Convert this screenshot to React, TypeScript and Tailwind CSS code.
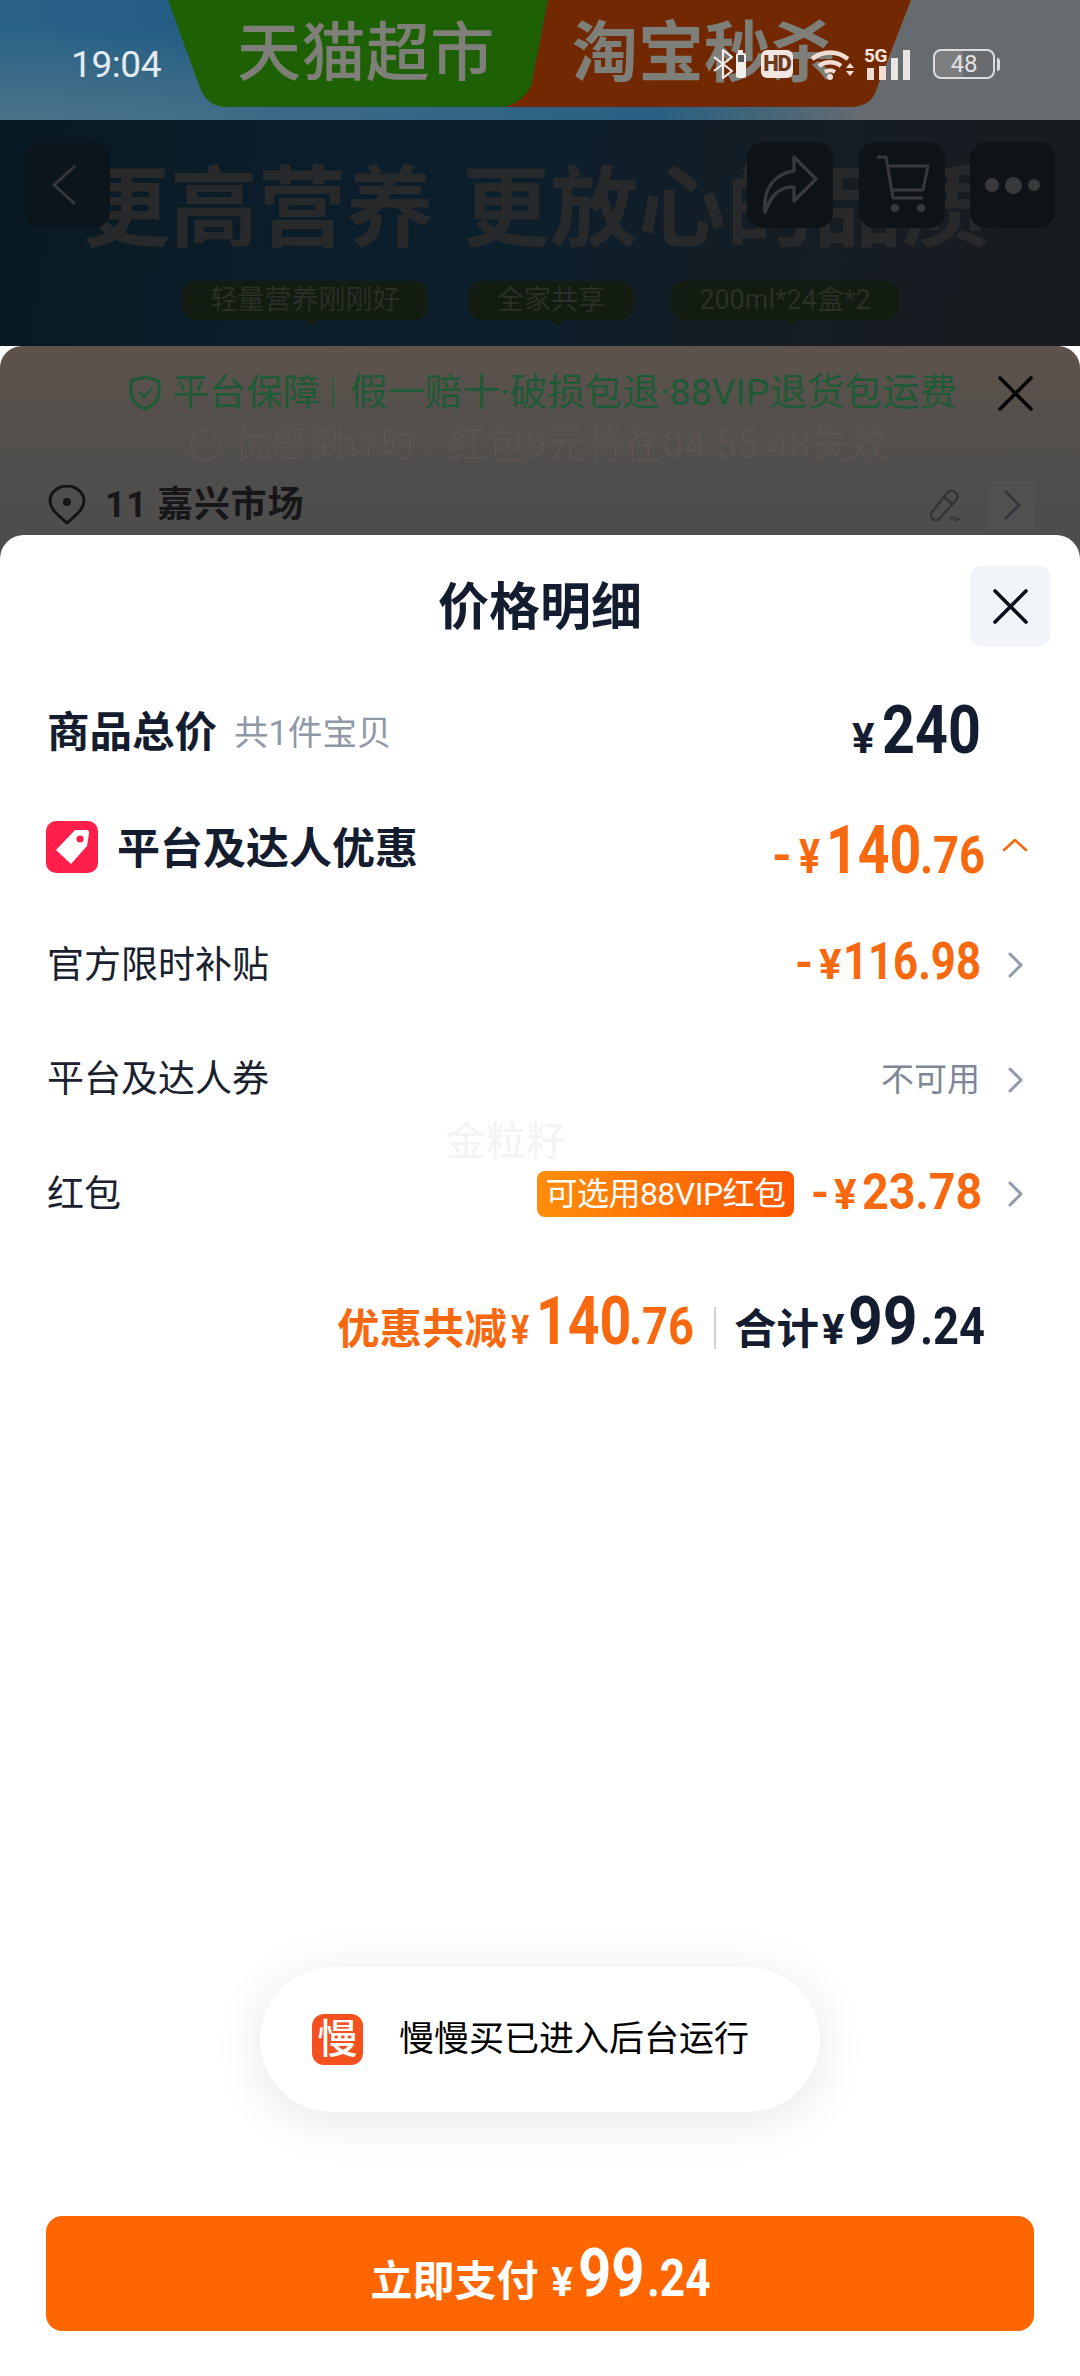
import React from "react";

const CJK = "font-['Roboto','Noto_Sans_CJK_SC',sans-serif]";

function Chevron({ color = "#8f9aab" }: { color?: string }) {
  return (
    <svg width="17" height="26" viewBox="0 0 17 26" fill="none">
      <path d="M3 2 L14 13 L3 24" stroke={color} strokeWidth="3" strokeLinecap="round" strokeLinejoin="round" />
    </svg>
  );
}

function Cross({ size, color, w = 4 }: { size: number; color: string; w?: number }) {
  return (
    <svg width={size} height={size} viewBox="0 0 34 34" fill="none">
      <path d="M2 2 L32 32 M32 2 L2 32" stroke={color} strokeWidth={w} strokeLinecap="round" />
    </svg>
  );
}

/* A narrowed run of digits: the box keeps the narrowed width, the glyphs are squeezed to fit it. */
function Cond({ c, children }: { c: string; children: React.ReactNode }) {
  return <span className={`inline-block origin-left leading-none font-bold whitespace-nowrap ${c}`}>{children}</span>;
}

function StatusIcons() {
  return (
    <div className="flex items-center h-[32px] mt-[8px] text-white">
      <svg width="36" height="32" viewBox="0 0 36 32" fill="none" className="mr-[13px]">
        <path d="M2 9 L20 23 L11 30 L11 2 L20 9 L2 23" stroke="#f1eeec" strokeWidth="2.2" strokeLinejoin="round" />
        <rect x="26" y="2" width="5" height="3" fill="#f1eeec" />
        <rect x="24" y="5" width="10" height="25" rx="2" fill="#f1eeec" />
        <rect x="26" y="7" width="6" height="7" fill="#5a5a58" />
      </svg>
      <div className="w-[32px] h-[28px] rounded-[6px] bg-[#f2e6e0] flex items-center justify-center mr-[17px]">
        <span className="text-[22px] font-black leading-none text-[#6c3a22] tracking-[-1px] font-['Roboto',sans-serif]">HD</span>
      </div>
      <svg width="44" height="32" viewBox="0 0 44 32" fill="none" className="mr-[13px]">
        <path d="M2 11 A28 28 0 0 1 38 11" stroke="#f1ddd3" strokeWidth="4.4" />
        <path d="M9 18 A18 18 0 0 1 31 18" stroke="#f1ddd3" strokeWidth="4.4" />
        <path d="M15 24 A9 9 0 0 1 25 24" stroke="#f1ddd3" strokeWidth="4" />
        <circle cx="20" cy="29" r="3" fill="#f1ddd3" />
        <path d="M36 20 L40 15 L44 20 Z M36 23 L44 23 L40 28 Z" fill="#f1ddd3" />
      </svg>
      <div className="relative w-[50px] h-[32px] mr-[16px]">
        <span className="absolute left-[-3px] top-[-2px] text-[19px] font-bold leading-none text-[#f4e3da] tracking-[-0.5px] font-['Roboto',sans-serif]">5G</span>
        <div className="absolute inset-0 flex items-end gap-[5px]">
          <div className="w-[7px] h-[12px] bg-[#f1ddd3]" />
          <div className="w-[7px] h-[14px] bg-[#f1ddd3]" />
          <div className="w-[7px] h-[22px] bg-[#e8e6e4]" />
          <div className="w-[7px] h-[30px] bg-[#e8e6e4]" />
        </div>
      </div>
      <div className="relative w-[62px] h-[30px] rounded-[8px] border-2 border-[#dcdcdc] flex items-center justify-center bg-[linear-gradient(to_right,#7b7d7f_48%,transparent_48%)]">
        <span className="text-[24px] leading-none text-[#e2e2e2] font-['Roboto',sans-serif]">48</span>
      </div>
      <div className="w-[3px] h-[13px] rounded-r bg-[#dcdcdc] ml-[2px]" />
    </div>
  );
}

function Tag({ text, w }: { text: string; w: string }) {
  return (
    <div className={`relative h-[39px] ${w} rounded-[14px] bg-[#121c10] flex items-center justify-center`}>
      <span className="text-[27px] leading-none text-[#2b3028] whitespace-nowrap">{text}</span>
      <div className="absolute bottom-[-6px] left-1/2 w-0 h-0 border-x-[6px] border-x-transparent border-t-[6px] border-t-[#121c10]" />
    </div>
  );
}

function HeaderArea() {
  return (
    <div className="relative h-[226px] bg-[linear-gradient(100deg,#0a1a24_0%,#0c1f2d_45%,#161d23_75%,#181c20_100%)] overflow-hidden">
      <div className="absolute left-[82px] top-[41px] flex text-[88px] leading-[96px] font-bold text-[#27292a] whitespace-nowrap">
        <span>更高营养</span>
        <span className="ml-[28px]">更放心的品质</span>
      </div>
      <div className="relative flex items-start pt-[22px] pl-[25px] pr-[25px]">
        <div className="w-[85px] h-[86px] rounded-[16px] bg-[#0c151c] flex items-center justify-center">
          <svg width="26" height="42" viewBox="0 0 26 42" fill="none" className="mr-[8px]">
            <path d="M24 2 L3 21 L24 40" stroke="#34383c" strokeWidth="3" />
          </svg>
        </div>
        <div className="ml-auto w-[86px] h-[86px] rounded-[16px] bg-[#0e1318] flex items-center justify-center">
          <svg width="58" height="62" viewBox="0 0 58 62" fill="none">
            <path d="M33 3 L55 25 L33 47 L33 33 C18 32 10 42 4 58 C2 36 12 20 33 17 Z" stroke="#38393b" strokeWidth="3.5" strokeLinejoin="round" />
          </svg>
        </div>
        <div className="ml-[26px] w-[86px] h-[86px] rounded-[16px] bg-[#0e1318] flex items-center justify-center">
          <svg width="58" height="62" viewBox="0 0 58 62" fill="none">
            <path d="M4 3 L13 3 L20 44 L50 44 M14 12 L55 12 L50 36 L19 36" stroke="#38393b" strokeWidth="3" strokeLinejoin="round" />
            <circle cx="22" cy="54" r="4" fill="#38393b" />
            <circle cx="48" cy="54" r="4" fill="#38393b" />
          </svg>
        </div>
        <div className="ml-[25px] w-[85px] h-[86px] rounded-[16px] bg-[#0e1318] flex items-center justify-center gap-[6px]">
          <div className="w-[14px] h-[14px] rounded-full bg-[#38393b]" />
          <div className="w-[17px] h-[17px] rounded-full bg-[#38393b]" />
          <div className="w-[12px] h-[12px] rounded-full bg-[#38393b]" />
        </div>
      </div>
      <div className="absolute left-[182px] top-[161px] flex">
        <Tag text="轻量营养刚刚好" w="w-[246px]" />
        <div className="w-[40px]" />
        <Tag text="全家共享" w="w-[166px]" />
        <div className="w-[37px]" />
        <Tag text="200ml*24盒*2" w="w-[228px]" />
      </div>
    </div>
  );
}

function BackSheet() {
  return (
    <div className="relative z-0 h-[219px] -mb-[30px] rounded-t-[22px] bg-[linear-gradient(to_bottom,#5e534b_0%,#55504c_30%,#4f4e4d_60%,#4d4d4d_100%)]">
      <div className="flex items-center h-[34px] relative top-[30px] pl-[129px] pr-[47px]">
        <svg width="32" height="36" viewBox="0 0 32 36" fill="none">
          <path d="M16 2 L30 6 V18 C30 26 23 31 16 34 C9 31 2 26 2 18 V6 Z" stroke="#1f5a36" strokeWidth="3" strokeLinejoin="round" />
          <path d="M10 17 L15 22 L23 13" stroke="#1f5a36" strokeWidth="2.6" />
        </svg>
        <span className="ml-[11px] text-[37px] leading-none text-[#1f5a36] whitespace-nowrap">平台保障</span>
        <div className="ml-[12px] mr-[16px] w-[2px] h-[30px] bg-[#2e5a3f]" />
        <span className="text-[37.5px] leading-none text-[#1f5a36] whitespace-nowrap">假一赔十·破损包退·88VIP退货包运费</span>
        <div className="ml-auto">
          <Cross size={35} color="#050505" w={3.6} />
        </div>
      </div>
      <div className="relative top-[48px] flex items-center h-[34px] pl-[189px]">
        <svg width="34" height="34" viewBox="0 0 34 34" fill="none">
          <circle cx="17" cy="17" r="15" stroke="#5a5350" strokeWidth="2.5" />
          <path d="M17 9 V18" stroke="#5a5350" strokeWidth="2.5" />
        </svg>
        <span className="ml-[11px] text-[36.6px] leading-none text-[#5a5350] whitespace-nowrap">优惠倒计时</span>
        <div className="ml-[12px] mr-[18px] w-[1px] h-[30px] bg-[#5a5350]" />
        <span className="text-[38.5px] leading-none text-[#5a5350] whitespace-nowrap">红包9元将在04:55:48失效</span>
      </div>
      <div className="relative top-[71px] flex items-center h-[40px] pl-[48px]">
        <svg width="38" height="40" viewBox="0 0 38 40" fill="none">
          <path d="M19 38 C10 30 2 24 2 16 A17 15 0 0 1 36 16 C36 24 28 30 19 38 Z" stroke="#141416" strokeWidth="3" strokeLinejoin="round" />
          <circle cx="19" cy="17" r="4" fill="#141416" />
        </svg>
        <span className="ml-[19px] text-[36px] leading-none font-bold text-[#17171a] whitespace-nowrap tracking-[0.7px]">11 嘉兴市场</span>
        <svg width="34" height="34" viewBox="0 0 34 34" fill="none" className="ml-auto">
          <path d="M4 24 L20 4 A6 6 0 0 1 29 11 L12 30 A5 5 0 0 1 4 24 Z M16 9 L25 17" stroke="#343436" strokeWidth="2.4" strokeLinejoin="round" />
          <path d="M22 31 Q25 28 27 31 T32 30" stroke="#343436" strokeWidth="2" />
        </svg>
        <div className="ml-[26px] mr-[45px] w-[47px] h-[48px] bg-[#515151] flex items-center justify-center">
          <svg width="18" height="32" viewBox="0 0 18 32" fill="none">
            <path d="M2 2 L16 16 L2 30" stroke="#34343a" strokeWidth="2.6" />
          </svg>
        </div>
      </div>
    </div>
  );
}

function SubRow({ label, right }: { label: string; right: React.ReactNode }) {
  return (
    <div className="flex items-center h-[114.5px] pl-[47px] pr-[56px]">
      <span className="text-[37px] leading-none text-[#19212f] whitespace-nowrap">{label}</span>
      <div className="ml-auto flex items-center">
        {right}
        <div className="ml-[27px]"><Chevron /></div>
      </div>
    </div>
  );
}

function Rows() {
  const rowNum = "inline-flex items-baseline text-[#f8690f] whitespace-nowrap";
  return (
    <>
      <SubRow
        label="官方限时补贴"
        right={
          <span className={`${rowNum} mb-[7px]`}>
            <Cond c="text-[46px] w-[16px]">-</Cond>
            <Cond c="text-[42px] w-[23px] ml-[8px]">¥</Cond>
            <Cond c="text-[52px] w-[137px] ml-[1px] scale-x-[0.84]">116.98</Cond>
          </span>
        }
      />
      <SubRow label="平台及达人券" right={<span className="text-[33px] leading-none text-[#7d8797] whitespace-nowrap">不可用</span>} />
      <SubRow
        label="红包"
        right={
          <div className="flex items-center">
            <div className="w-[257px] h-[46px] rounded-[8px] bg-[linear-gradient(to_right,#ff8d0a,#ff5700)] flex items-center justify-center">
              <span className="text-[32px] leading-none text-white whitespace-nowrap tracking-[-0.5px]">可选用88VIP红包</span>
            </div>
            <span className={`${rowNum} ml-[17px] mb-[4px]`}>
              <Cond c="text-[46px] w-[16px]">-</Cond>
              <Cond c="text-[42px] w-[23px] ml-[7px]">¥</Cond>
              <Cond c="text-[50px] w-[118px] ml-[5px] scale-x-[0.93]">23.78</Cond>
            </span>
          </div>
        }
      />
    </>
  );
}

function TopBanner() {
  return (
    <div className="absolute inset-0">
      <svg width="1080" height="120" viewBox="0 0 1080 120" className="absolute left-0 top-0">
        <path d="M168 0 L548 0 L531 86 Q528 103 505 107 L226 107 Q208 107 200 88 Z" fill="#1e6105" />
        <path d="M548 0 L911 0 L877 88 Q872 107 850 107 L505 107 Q524 101 531 86 Z" fill="#722800" />
      </svg>
      <div className="absolute left-[237px] top-[16px] text-[64px] leading-[76px] font-medium text-[#7f7f7a] whitespace-nowrap tracking-[0.4px]">天猫超市</div>
      <div className="absolute left-[572px] top-[16px] text-[66px] leading-[76px] font-bold text-[#7f7f7a] whitespace-nowrap">淘宝秒杀</div>
    </div>
  );
}

export default function App() {
  return (
    <div className={`relative w-[1080px] h-[2376px] overflow-hidden flex flex-col bg-white ${CJK}`}>
      <div className="relative h-[120px] shrink-0 bg-[radial-gradient(ellipse_at_0%_100%,#4b7389_0%,transparent_55%),linear-gradient(90deg,#2a6388_0%,#1f5a82_25%,#1f5a82_60%,#3a6378_68%,#666b70_80%,#676b70_100%)]">
        <TopBanner />
        <div className="relative flex items-start justify-between pt-[40px] pl-[71px] pr-[80px]">
          <span className="text-[37px] leading-[50px] tracking-[-0.4px] text-[#e4ebf0] whitespace-nowrap">19:04</span>
          <StatusIcons />
        </div>
      </div>
      <HeaderArea />
      <BackSheet />
      <div className="relative z-10 flex-1 flex flex-col rounded-t-[24px] bg-white">
        <div className="relative h-[80px] mt-[31px] flex items-center justify-center">
          <span className="mt-[2px] text-[51px] leading-none font-bold text-[#141c30] whitespace-nowrap">价格明细</span>
          <div className="absolute right-[30px] top-0 w-[80px] h-[80px] rounded-[10px] bg-[#f1f5f9] flex items-center justify-center">
            <Cross size={35} color="#0b0f1a" w={3.6} />
          </div>
        </div>
        <div className="flex items-center h-[100px] mt-[37px] pl-[47px] pr-[100px]">
          <span className="text-[42.5px] leading-none font-bold text-[#141c30] whitespace-nowrap">商品总价</span>
          <span className="ml-[17px] text-[34.5px] leading-none text-[#8e99a8] whitespace-nowrap">共1件宝贝</span>
          <div className="ml-auto inline-flex items-baseline mb-[4px] text-[#141c30]">
            <Cond c="text-[42px] w-[23px]">¥</Cond>
            <Cond c="text-[66px] w-[98px] ml-[7px] scale-x-[0.87]">240</Cond>
          </div>
        </div>
        <div className="flex items-center h-[100px] mt-[14px] pl-[46px] pr-[52px]">
          <div className="w-[52px] h-[52px] rounded-[10px] bg-[#ff1f4a] flex items-center justify-center">
            <svg width="36" height="38" viewBox="0 0 36 38" fill="none">
              <path d="M21 2 L33 2 Q35 2 35 5 L33 18 L17 36 L2 22 Z" fill="#ffffff" />
              <circle cx="26" cy="11" r="3.6" fill="#ff1f4a" />
            </svg>
          </div>
          <span className="ml-[19px] mt-[4px] text-[43px] leading-none font-bold text-[#141c30] whitespace-nowrap">平台及达人优惠</span>
          <div className="ml-auto flex items-center mt-[8px]">
            <span className="inline-flex items-baseline text-[#f8690f]">
              <Cond c="text-[50px] w-[16px]">-</Cond>
              <Cond c="text-[48px] w-[22px] ml-[11px] scale-x-[0.82]">¥</Cond>
              <Cond c="text-[66px] w-[90px] ml-[5px] scale-x-[0.84]">140</Cond>
              <Cond c="text-[52px] w-[65px] ml-[4px] scale-x-[0.87]">.76</Cond>
            </span>
            <svg width="26" height="14" viewBox="0 0 26 14" fill="none" className="ml-[17px] mb-[12px]">
              <path d="M2 12 L13 2 L24 12" stroke="#f8690f" strokeWidth="2.6" strokeLinecap="round" strokeLinejoin="round" />
            </svg>
          </div>
        </div>
        <div className="h-[11px]" />
        <Rows />
        <div className="flex items-baseline justify-end h-[80px] mt-[37px] pr-[95px]">
          <span className="text-[42.5px] leading-none font-bold text-[#f8690f] whitespace-nowrap">优惠共减</span>
          <span className="inline-flex items-baseline text-[#f8690f]">
            <Cond c="text-[40px] w-[20px] ml-[4px] scale-x-[0.85]">¥</Cond>
            <Cond c="text-[66px] w-[89px] ml-[5px] scale-x-[0.84]">140</Cond>
            <Cond c="text-[52px] w-[65px] ml-[4px] scale-x-[0.87]">.76</Cond>
          </span>
          <div className="w-[2px] h-[42px] bg-[#cfd2d6] ml-[20px] mr-[18px] translate-y-[5px]" />
          <span className="text-[42.5px] leading-none font-bold text-[#141c30] whitespace-nowrap">合计</span>
          <span className="inline-flex items-baseline text-[#141c30]">
            <Cond c="text-[42px] w-[23px] ml-[3px]">¥</Cond>
            <Cond c="text-[66px] w-[68px] ml-[3px] scale-x-[0.92]">99</Cond>
            <Cond c="text-[52px] w-[65px] ml-[4px] scale-x-[0.87]">.24</Cond>
          </span>
        </div>
        <div className="absolute left-[446px] top-[587px] text-[40px] leading-none text-[#f3f3f3] whitespace-nowrap">金粒籽</div>
        <div className="mt-auto mb-[45px] mx-[46px] h-[115px] rounded-[16px] bg-[#ff6600] flex items-center justify-center">
          <span className="inline-flex items-baseline text-white">
            <span className="text-[42px] leading-none font-bold whitespace-nowrap">立即支付</span>
            <Cond c="text-[40px] w-[22px] ml-[13px]">¥</Cond>
            <Cond c="text-[66px] w-[65px] ml-[4px] scale-x-[0.88]">99</Cond>
            <Cond c="text-[52px] w-[63px] ml-[4px] scale-x-[0.85]">.24</Cond>
          </span>
        </div>
        <div className="absolute left-[260px] top-[1432px] w-[560px] h-[145px] rounded-full bg-white shadow-[0_8px_50px_rgba(0,0,0,0.10)] flex items-center pl-[52px]">
          <div className="w-[51px] h-[51px] rounded-[12px] bg-[#f4511e] flex items-center justify-center">
            <span className="text-[40px] leading-none font-medium text-white">慢</span>
          </div>
          <span className="ml-[36px] text-[35px] leading-none text-black whitespace-nowrap">慢慢买已进入后台运行</span>
        </div>
      </div>
    </div>
  );
}
